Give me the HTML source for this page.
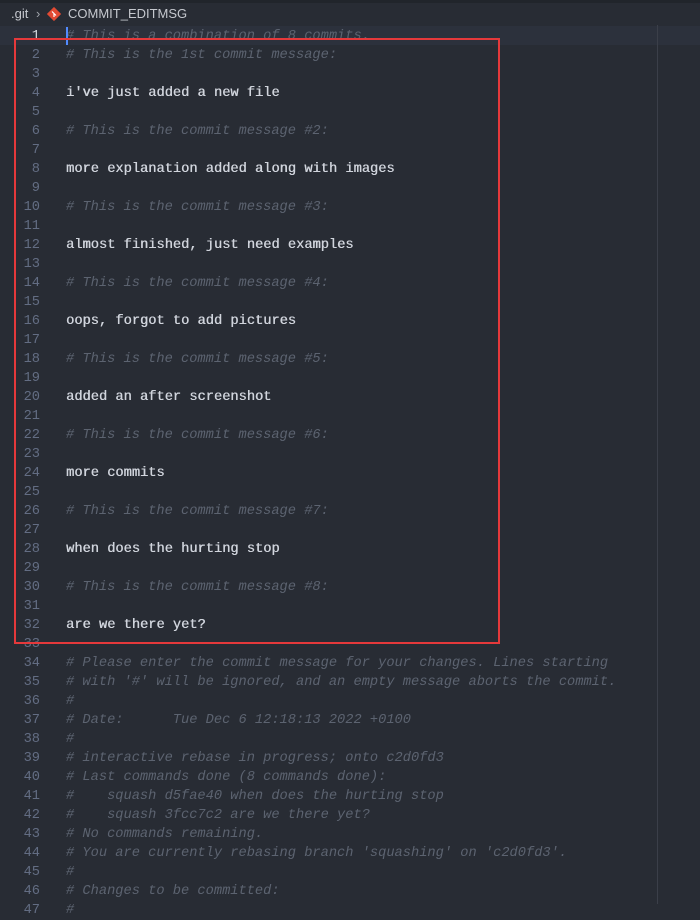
<!DOCTYPE html>
<html><head><meta charset="utf-8"><style>
html,body{margin:0;padding:0;}
body{width:700px;height:904px;overflow:hidden;background:#282c34;position:relative;font-family:"Liberation Mono",monospace;}
.top{position:absolute;left:0;top:0;width:700px;height:3px;background:#21252b;}
.bc{position:absolute;left:0;top:3px;height:22px;width:700px;background:#282c34;font-family:"Liberation Sans",sans-serif;font-size:13px;color:#c5c8ce;line-height:22px;}
.bc span{position:absolute;top:0;}
.cur{position:absolute;left:0;top:26px;width:700px;height:19px;background:#2c313c;}
.vr{position:absolute;left:657px;top:25px;width:1px;height:879px;background:#3b3f49;}
.caret{position:absolute;left:66px;top:27px;width:2px;height:18px;background:#528bff;}
.ln{position:absolute;left:0;width:40px;text-align:right;font-size:13.7px;color:#636d83;line-height:19px;height:19px;}
.tx{position:absolute;left:66px;font-size:13.7px;line-height:19px;height:19px;white-space:pre;}
.c{color:#5c6370;font-style:italic;}
.n{color:#d0d4dc;font-weight:normal;text-shadow:0.4px 0 0 #d0d4dc;}
.box{position:absolute;left:14px;top:38px;width:482px;height:602px;border:2px solid #e5393b;}
</style></head><body>
<div class="top"></div>
<div class="bc"><span style="left:11px">.git</span><span style="left:36px;color:#a0a4ab">&#x203A;</span>
<svg style="position:absolute;left:47px;top:4px" width="14" height="14" viewBox="0 0 14 14"><rect x="2" y="2" width="10" height="10" transform="rotate(45 7 7)" fill="#e24a33"/><path d="M5 4.5 L7 6.5 M7 6.5 V10 M7 6.5 L9 8.5" stroke="#fff" stroke-width="1.2" fill="none"/></svg>
<span style="left:68px">COMMIT_EDITMSG</span></div>
<div class="cur"></div>
<div class="vr"></div>
<div id="lines"></div>
<div class="caret"></div>
<div class="box"></div>
<script>
var L=[
["c","# This is a combination of 8 commits."],
["c","# This is the 1st commit message:"],["",""],
["n","i've just added a new file"],["",""],
["c","# This is the commit message #2:"],["",""],
["n","more explanation added along with images"],["",""],
["c","# This is the commit message #3:"],["",""],
["n","almost finished, just need examples"],["",""],
["c","# This is the commit message #4:"],["",""],
["n","oops, forgot to add pictures"],["",""],
["c","# This is the commit message #5:"],["",""],
["n","added an after screenshot"],["",""],
["c","# This is the commit message #6:"],["",""],
["n","more commits"],["",""],
["c","# This is the commit message #7:"],["",""],
["n","when does the hurting stop"],["",""],
["c","# This is the commit message #8:"],["",""],
["n","are we there yet?"],["",""],
["c","# Please enter the commit message for your changes. Lines starting"],
["c","# with '#' will be ignored, and an empty message aborts the commit."],
["c","#"],
["c","# Date:      Tue Dec 6 12:18:13 2022 +0100"],
["c","#"],
["c","# interactive rebase in progress; onto c2d0fd3"],
["c","# Last commands done (8 commands done):"],
["c","#    squash d5fae40 when does the hurting stop"],
["c","#    squash 3fcc7c2 are we there yet?"],
["c","# No commands remaining."],
["c","# You are currently rebasing branch 'squashing' on 'c2d0fd3'."],
["c","#"],
["c","# Changes to be committed:"],
["c","#"]
];
var h="";
for(var i=0;i<L.length;i++){var t=27+i*19;
h+='<div class="ln" style="top:'+t+'px'+(i==0?';color:#d7dae0':'')+'">'+(i+1)+'</div>';
if(L[i][1])h+='<div class="tx '+L[i][0]+'" style="top:'+t+'px">'+L[i][1].replace(/&/g,'&amp;').replace(/</g,'&lt;')+'</div>';}
document.getElementById('lines').innerHTML=h;
</script>
</body></html>
